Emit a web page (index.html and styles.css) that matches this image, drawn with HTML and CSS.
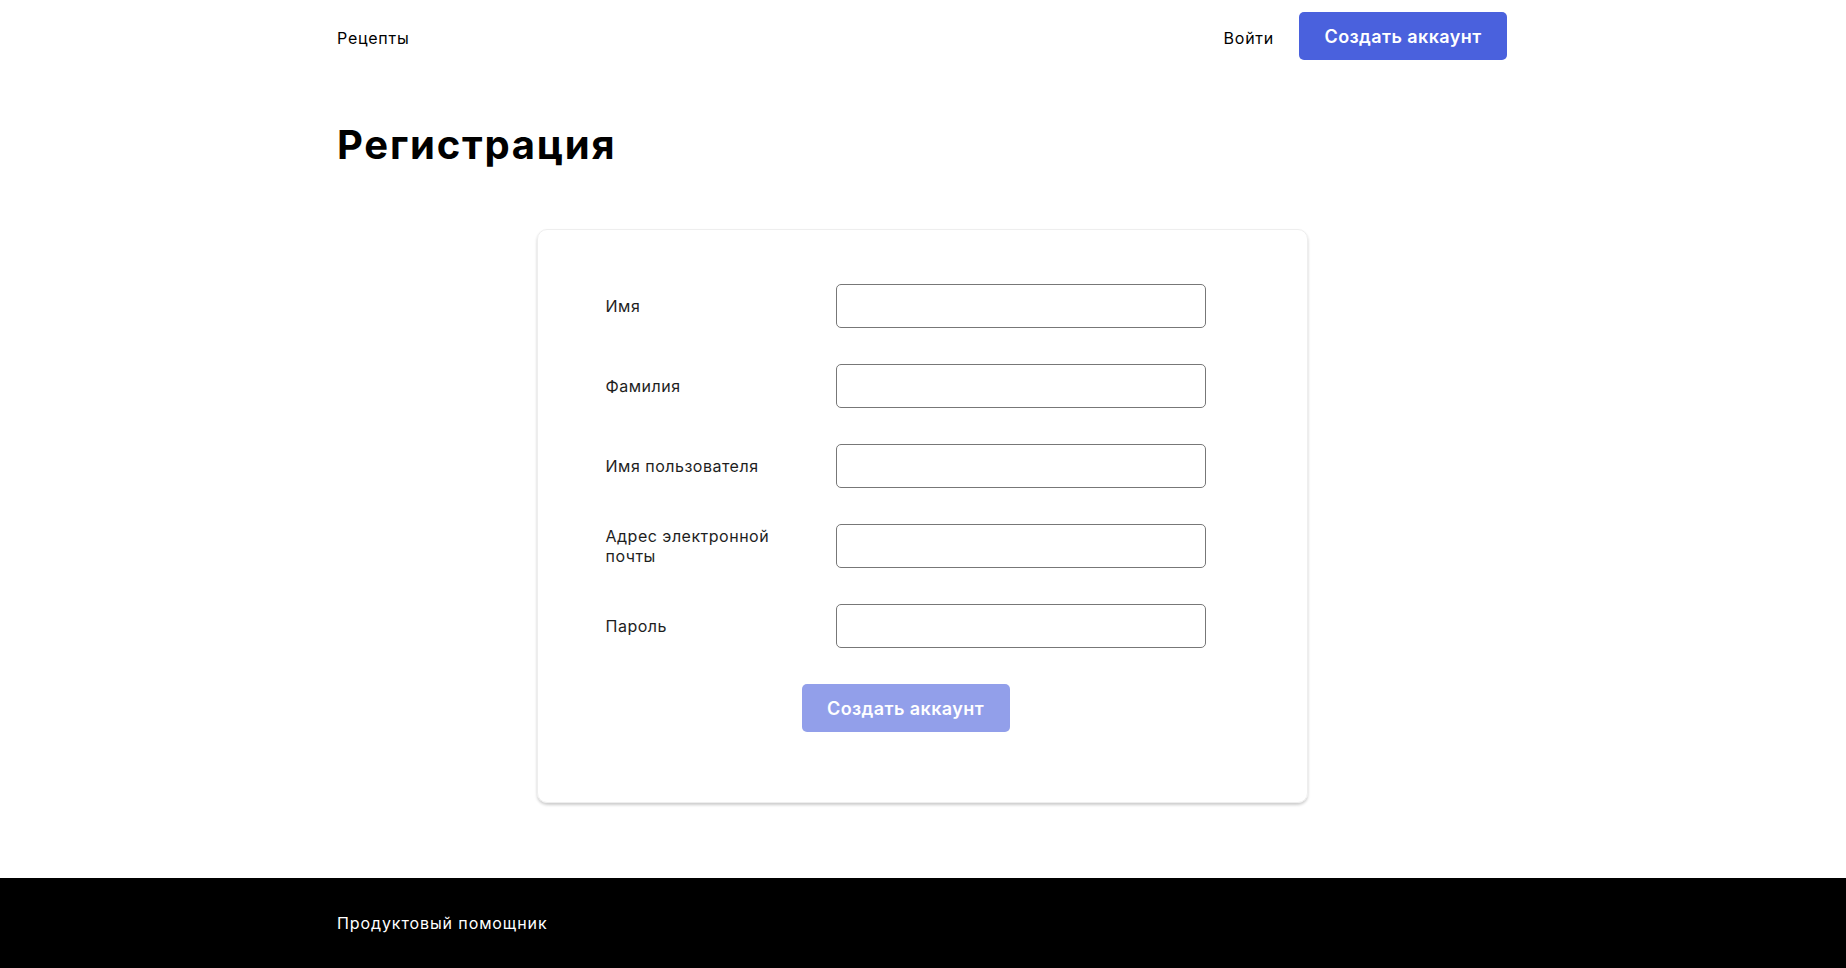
FILE: index.html
```html
<!DOCTYPE html>
<html lang="ru">
<head>
<meta charset="utf-8">
<title>Регистрация</title>
<link rel="stylesheet" href="styles.css">
</head>
<body>
<div class="page">
  <header class="header">
    <div class="container header-inner">
      <a class="nav-link" href="#">Рецепты</a>
      <div class="header-actions">
        <a class="nav-link" href="#">Войти</a>
        <a class="btn btn-primary" href="#">Создать аккаунт</a>
      </div>
    </div>
  </header>
  <main class="main">
    <div class="container">
      <h1 class="title">Регистрация</h1>
      <div class="card">
        <form class="form">
          <div class="form-row">
            <label class="form-label">Имя</label>
            <input class="form-input" type="text">
          </div>
          <div class="form-row">
            <label class="form-label">Фамилия</label>
            <input class="form-input" type="text">
          </div>
          <div class="form-row">
            <label class="form-label">Имя пользователя</label>
            <input class="form-input" type="text">
          </div>
          <div class="form-row">
            <label class="form-label">Адрес электронной почты</label>
            <input class="form-input" type="email">
          </div>
          <div class="form-row">
            <label class="form-label">Пароль</label>
            <input class="form-input" type="password">
          </div>
          <div class="form-actions">
            <button class="btn btn-primary btn-disabled" type="button">Создать аккаунт</button>
          </div>
        </form>
      </div>
    </div>
  </main>
  <footer class="footer">
    <div class="container">
      <span class="footer-text">Продуктовый помощник</span>
    </div>
  </footer>
</div>
</body>
</html>
```

FILE: styles.css
```css
* { box-sizing: border-box; }
html, body { margin: 0; padding: 0; }
body {
  font-family: Inter, "Noto Sans", sans-serif;
  color: #000;
  background: #fff;
}
.page {
  min-height: 100vh;
  display: flex;
  flex-direction: column;
}
.container {
  width: 1172px;
  margin: 0 auto;
  padding-right: 2px;
}
.header-inner {
  height: 72px;
  display: flex;
  align-items: center;
  justify-content: space-between;
}
.header-actions {
  display: flex;
  align-items: center;
  gap: 25px;
}
.nav-link {
  font-size: 16px;
  letter-spacing: 0.75px;
  color: #000;
  text-decoration: none;
  padding-top: 4px;
}
.btn {
  display: inline-flex;
  align-items: center;
  justify-content: center;
  height: 48px;
  width: 208px;
  border: none;
  border-radius: 5px;
  font-family: inherit;
  font-size: 18px;
  font-weight: 600;
  letter-spacing: 0.4px;
  color: #fff;
  text-decoration: none;
  cursor: pointer;
}
.btn-primary { background: #4a61dd; }
.btn-disabled { opacity: 0.6; }
.main {
  flex: 1;
  padding-bottom: 75px;
}
.title {
  margin: 49px 0 0;
  font-size: 40px;
  line-height: 48px;
  font-weight: 700;
  letter-spacing: 1.75px;
}
.card {
  width: 771px;
  margin: 60px auto 0;
  border: 1px solid #eeeeee;
  border-radius: 10px;
  box-shadow: 0 2px 3px rgba(0, 0, 0, 0.2);
  padding: 54px 70px 70px 68px;
}
.form {
  width: 600px;
  display: flex;
  flex-direction: column;
  gap: 36px;
}
.form-row {
  display: flex;
  align-items: center;
  gap: 30px;
}
.form-label {
  width: 200px;
  font-size: 16px;
  line-height: 20px;
  letter-spacing: 0.5px;
  color: #1e1e1e;
  padding-right: 20px;
}
.form-input {
  width: 370px;
  height: 44px;
  border: 1px solid #777;
  border-radius: 5px;
  font-family: inherit;
  font-size: 16px;
  padding: 0 12px;
}
.form-actions {
  display: flex;
  justify-content: center;
}
.footer {
  background: #000;
  height: 90px;
  display: flex;
  align-items: center;
}
.footer-text {
  color: #fff;
  font-size: 16px;
  letter-spacing: 0.9px;
}
```
